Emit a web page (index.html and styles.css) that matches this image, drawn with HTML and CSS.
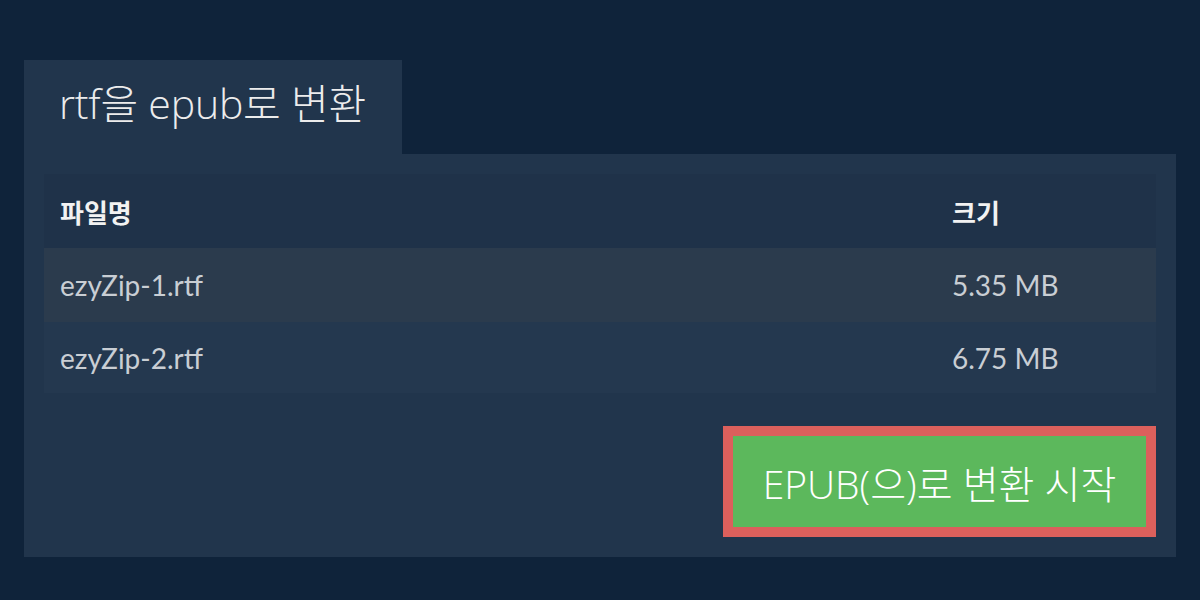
FILE: index.html
```html
<!DOCTYPE html>
<html lang="ko">
<head>
<meta charset="utf-8">
<title>rtf을 epub로 변환</title>
<link rel="stylesheet" href="styles.css">
</head>
<body>
<div class="wrap">
  <div class="tab">rtf을 epub로 변환</div>
  <div class="panel">
    <table class="files">
      <thead>
        <tr><th class="name">파일명</th><th class="size">크기</th></tr>
      </thead>
      <tbody>
        <tr class="odd"><td>ezyZip-1.rtf</td><td>5.35 MB</td></tr>
        <tr class="even"><td>ezyZip-2.rtf</td><td>6.75 MB</td></tr>
      </tbody>
    </table>
    <div class="actions">
      <button class="convert">EPUB(으)로 변환 시작</button>
    </div>
  </div>
</div>
</body>
</html>
```

FILE: styles.css
```css
html, body {
  margin: 0;
  padding: 0;
  background: #0f233a;
}
body {
  font-family: "Lato", "Noto Sans CJK KR", sans-serif;
}
.wrap {
  padding: 60px 24px 0;
  display: flex;
  flex-direction: column;
  align-items: flex-start;
}
.tab {
  width: 378px;
  height: 94px;
  box-sizing: border-box;
  padding: 18px 0 0 35px;
  background: #21354c;
  color: #ececec;
  font-family: "Open Sans", "Noto Sans CJK KR", sans-serif;
  font-weight: 300;
  font-size: 41px;
  line-height: 50px;
  letter-spacing: -0.2px;
  white-space: nowrap;
}
.panel {
  align-self: stretch;
  background: #21354c;
  padding: 20px;
  display: flex;
  flex-direction: column;
}
.files {
  width: 100%;
  border-collapse: collapse;
  font-size: 28px;
  color: #c9ced4;
}
.files th, .files td {
  text-align: left;
  padding: 0 16px;
}
.files th {
  height: 74px;
  background: #1f3249;
  color: #f2f2f2;
  font-weight: 700;
  font-family: "Noto Sans CJK KR", sans-serif;
  font-size: 26px;
}
.files th.size {
  width: 188px;
}
.files tr.odd td {
  height: 74px;
  background: #2b3b4d;
}
.files tr.even td {
  height: 71px;
  background: #24384f;
}
.actions {
  display: flex;
  justify-content: flex-end;
  margin-top: 33px;
}
.convert {
  width: 433px;
  height: 111px;
  border: 10px solid #dc605c;
  background: #5cb85c;
  color: #ffffff;
  font-family: "Open Sans", "Noto Sans CJK KR", sans-serif;
  font-weight: 300;
  font-size: 39px;
  padding: 0;
  cursor: pointer;
}
```
